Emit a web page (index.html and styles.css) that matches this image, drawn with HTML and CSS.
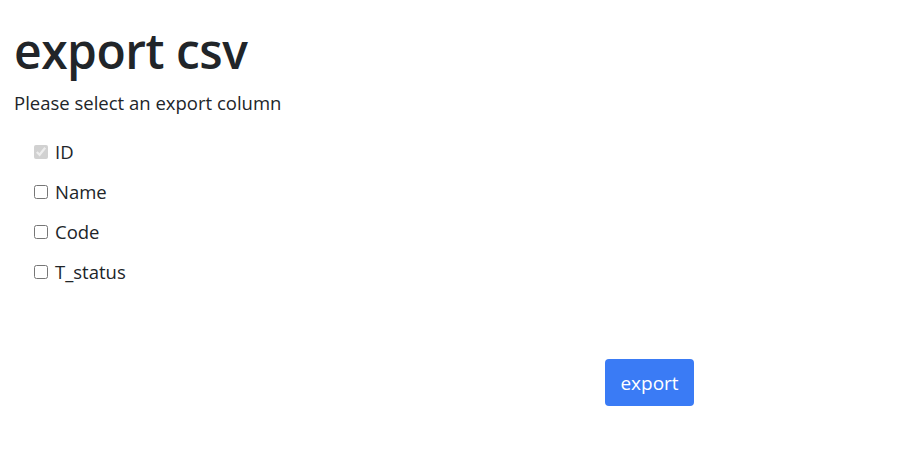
FILE: index.html
```html
<!DOCTYPE html>
<html>
<head>
<meta charset="utf-8">
<link rel="stylesheet" href="styles.css">
</head>
<body>
<div class="page">
  <h1 class="title">export csv</h1>
  <p class="lead">Please select an export column</p>
  <div class="cols">
    <label class="col"><input type="checkbox" checked disabled> ID</label>
    <label class="col"><input type="checkbox"> Name</label>
    <label class="col"><input type="checkbox"> Code</label>
    <label class="col"><input type="checkbox"> T_status</label>
  </div>
  <div class="actions">
    <button class="btn">export</button>
  </div>
</div>
</body>
</html>
```
FILE: styles.css
```css
html, body {
  margin: 0;
  padding: 0;
  background: #fff;
}
body {
  font-family: "Open Sans", "Noto Sans", sans-serif;
  color: #212529;
  font-size: 16px;
}
.page {
  padding: 22px 14px 0 14px;
}
.title {
  font-size: 48px;
  font-weight: 600;
  line-height: 58px;
  margin: 0 0 10px 0;
  letter-spacing: -0.5px;
}
.lead {
  margin: 0 0 24px 0;
  font-size: 18.5px;
  line-height: 26px;
}
.cols {
  display: flex;
  flex-direction: column;
  gap: 16px;
  padding-left: 20px;
}
.col {
  display: flex;
  align-items: center;
  gap: 7px;
  font-size: 18.5px;
  line-height: 24px;
}
.col input {
  margin: 0;
  width: 14px;
  height: 14px;
}
.actions {
  margin-top: 75px;
  padding-left: 591px;
}
.btn {
  background: #3a7bf5;
  color: #fff;
  border: none;
  border-radius: 4px;
  font-family: inherit;
  font-size: 19px;
  width: 89px;
  height: 47px;
  padding: 0;
}
```
